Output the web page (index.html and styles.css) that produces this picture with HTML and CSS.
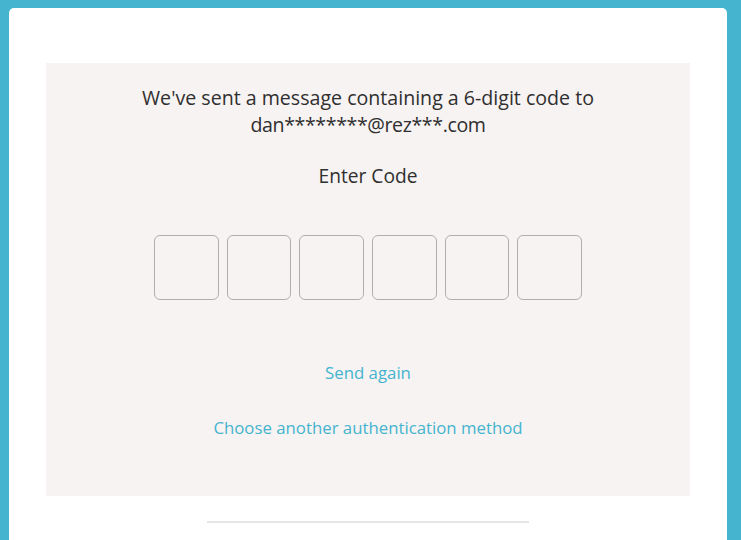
FILE: index.html
```html
<!DOCTYPE html>
<html>
<head>
<meta charset="utf-8">
<link rel="stylesheet" href="styles.css">
</head>
<body>
<div class="card">
  <div class="panel">
    <p class="msg">We've sent a message containing a 6-digit code to<br><span class="email">dan********@rez***.com</span></p>
    <p class="label">Enter Code</p>
    <div class="code">
      <input class="digit" type="text" maxlength="1">
      <input class="digit" type="text" maxlength="1">
      <input class="digit" type="text" maxlength="1">
      <input class="digit" type="text" maxlength="1">
      <input class="digit" type="text" maxlength="1">
      <input class="digit" type="text" maxlength="1">
    </div>
    <a class="link send" href="#">Send again</a>
    <a class="link other" href="#">Choose another authentication method</a>
  </div>
  <div class="divider"></div>
</div>
</body>
</html>
```
FILE: styles.css
```css
html, body {
  margin: 0;
  padding: 0;
  background: #45b4cf;
  height: 100%;
  overflow: hidden;
}
body {
  box-sizing: border-box;
  padding: 8px 14px 0 9px;
  font-family: "Open Sans", "Noto Sans", sans-serif;
}
.card {
  box-sizing: border-box;
  background: #ffffff;
  border-radius: 5px 5px 0 0;
  padding: 55px 37px 0 37px;
  height: 100%;
}
.panel {
  background: #f7f3f2;
  height: 433px;
  display: flex;
  flex-direction: column;
  align-items: center;
  box-sizing: border-box;
  padding-top: 21px;
}
.msg {
  margin: 0;
  text-align: center;
  color: #2f2f2f;
  font-size: 19.6px;
  line-height: 27px;
}
.email {
  letter-spacing: -0.4px;
}
.label {
  margin: 24px 0 0 0;
  color: #2f2f2f;
  font-size: 19.2px;
  line-height: 27px;
}
.code {
  display: flex;
  gap: 8px;
  margin-top: 46px;
}
.digit {
  width: 64.67px;
  height: 65px;
  box-sizing: border-box;
  border: 1px solid #b3aeae;
  border-radius: 6px;
  background: transparent;
  margin: 0;
  padding: 0;
  outline: none;
}
.link {
  color: #45b4cf;
  text-decoration: none;
  font-size: 16.8px;
  line-height: 24px;
}
.send {
  margin-top: 61px;
}
.other {
  margin-top: 31px;
}
.divider {
  width: 322px;
  height: 2px;
  background: #e6e4e6;
  margin: 25px auto 0 auto;
}
```
